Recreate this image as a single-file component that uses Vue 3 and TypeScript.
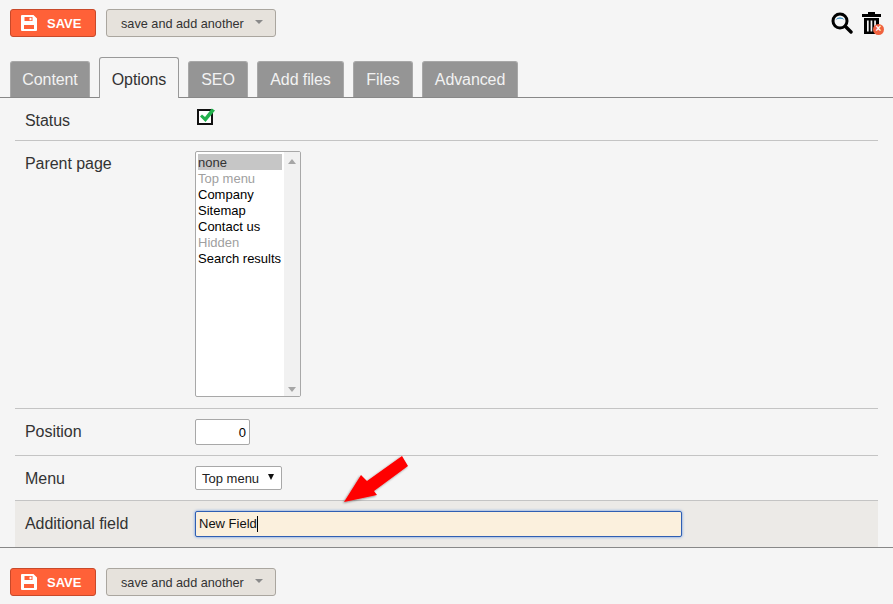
<script setup lang="ts">
const tabs = [
  { label: 'Content', w: 80 },
  { label: 'Options', w: 80, active: true },
  { label: 'SEO', w: 60 },
  { label: 'Add files', w: 87 },
  { label: 'Files', w: 60 },
  { label: 'Advanced', w: 96 },
]
const options = [
  { label: 'none', sel: true },
  { label: 'Top menu', dim: true },
  { label: 'Company' },
  { label: 'Sitemap' },
  { label: 'Contact us' },
  { label: 'Hidden', dim: true },
  { label: 'Search results' },
]
</script>

<template>
  <div class="page">
    <div class="toolbar top">
      <button class="save">
        <svg width="16" height="16" viewBox="0 0 16 16" class="disk">
          <path fill="#fff" fill-rule="evenodd" d="M1 0h11.5L16 3.5V15a1 1 0 0 1-1 1H1a1 1 0 0 1-1-1V1a1 1 0 0 1 1-1zM3.500 2v4h8V2zM3 10v4h10v-4zM8.500 2.700h2v2.600h-2z"/>
        </svg>
        <span>SAVE</span>
      </button>
      <button class="another">
        <span>save and add another</span>
        <i class="caret"></i>
      </button>
      <div class="tools">
        <svg width="22" height="22" viewBox="0 0 22 22">
          <circle cx="9" cy="9" r="7" fill="none" stroke="#000" stroke-width="3"/>
          <path d="M4.500 8a5 5 0 0 1 9 0a6 4 0 0 0-9 0z" fill="#3d93c4"/>
          <path d="M14.500 14.500L20 20" stroke="#000" stroke-width="3.400" stroke-linecap="round"/>
        </svg>
        <span class="trash">
          <svg width="19" height="22" viewBox="0 0 19 22">
            <path fill="#000" fill-rule="evenodd" d="M6 0h7v2h6v3H0V2h6zM2 6h15v16H2zM5 8.500v11h1.700v-11zM8.600 8.500v11h1.700v-11zM12.200 8.500v11h1.700v-11z"/>
          </svg>
          <span class="badge">×</span>
        </span>
      </div>
    </div>

    <div class="tabs">
      <div
        v-for="t in tabs"
        :key="t.label"
        class="tab"
        :class="{ active: t.active }"
        :style="{ width: t.w + 'px' }"
      >{{ t.label }}</div>
    </div>

    <div class="form">
      <div class="row status">
        <label>Status</label>
        <svg class="check" width="18" height="17" viewBox="0 0 18 17">
          <rect x="1" y="2" width="14" height="14" fill="#fff" stroke="#111" stroke-width="2"/>
          <path d="M5 6.500L8 9L14.800 0.500L18 2.500L8.500 14L3 8.500z" fill="#22b14c"/>
        </svg>
      </div>
      <div class="row parent">
        <label>Parent page</label>
        <div class="listbox">
          <div class="items">
            <div
              v-for="o in options"
              :key="o.label"
              class="opt"
              :class="{ sel: o.sel, dim: o.dim }"
            >{{ o.label }}</div>
          </div>
          <div class="scroll">
            <i class="up"></i>
            <i class="down"></i>
          </div>
        </div>
      </div>
      <div class="row position">
        <label>Position</label>
        <div class="num">0</div>
      </div>
      <div class="row menu">
        <label>Menu</label>
        <div class="select"><span>Top menu</span><i class="sel-caret"></i></div>
      </div>
      <div class="row extra">
        <label>Additional field</label>
        <div class="field"><span>New Field</span><i class="cursor"></i></div>
        <svg class="arrow" width="72" height="54" viewBox="0 0 72 54">
          <defs>
            <filter id="sh" x="-20%" y="-20%" width="140%" height="140%">
              <feDropShadow dx="-1" dy="1" stdDeviation="1.200" flood-color="#000" flood-opacity="0.450"/>
            </filter>
          </defs>
          <path d="M62 2L68 12L34 37L37 41L4 48L21 21L27 27z" fill="#f00" filter="url(#sh)"/>
        </svg>
      </div>
    </div>

    <div class="toolbar bottom">
      <button class="save">
        <svg width="16" height="16" viewBox="0 0 16 16" class="disk">
          <path fill="#fff" fill-rule="evenodd" d="M1 0h11.5L16 3.5V15a1 1 0 0 1-1 1H1a1 1 0 0 1-1-1V1a1 1 0 0 1 1-1zM3.500 2v4h8V2zM3 10v4h10v-4zM8.500 2.700h2v2.600h-2z"/>
        </svg>
        <span>SAVE</span>
      </button>
      <button class="another">
        <span>save and add another</span>
        <i class="caret"></i>
      </button>
    </div>
  </div>
</template>

<style>
html, body { margin: 0; background: #f5f5f5; }
</style>

<style scoped>
.page {
  width: 893px;
  height: 604px;
  background: #f5f5f5;
  font-family: "Liberation Sans", Arial, sans-serif;
  color: #333;
  overflow: hidden;
}
.toolbar {
  display: flex;
  align-items: flex-start;
  gap: 10px;
  padding-left: 10px;
}
.toolbar.top { padding-top: 9px; height: 48px; box-sizing: border-box; }
.toolbar.bottom { padding-top: 20px; }
button {
  box-sizing: border-box;
  height: 28px;
  margin: 0;
  border-radius: 3px;
  font-family: inherit;
  display: flex;
  align-items: center;
}
button span { padding-top: 1px; }
.save {
  width: 86px;
  background: #ff6138;
  border: 1px solid #c8492a;
  color: #fff;
  font-weight: bold;
  font-size: 13px;
  padding: 0 0 0 10px;
}
.disk { margin-right: 10px; flex: none; }
.another {
  width: 170px;
  background: #e6e2dc;
  border: 1px solid #aaa69f;
  color: #333;
  font-size: 12.700px;
  padding: 0 0 0 14px;
}
.caret {
  margin-left: 11px;
  margin-top: -3px;
  border-left: 4px solid transparent;
  border-right: 4px solid transparent;
  border-top: 4px solid #8a8a8a;
}
.tools {
  margin-left: auto;
  display: flex;
  gap: 9px;
  align-items: flex-start;
  padding-right: 10px;
  margin-top: 3px;
}
.trash { position: relative; display: block; width: 21px; height: 22px; }
.badge {
  position: absolute;
  right: -1px;
  bottom: -1px;
  width: 11px;
  height: 11px;
  border-radius: 50%;
  background: #f0623f;
  color: #fff;
  font-size: 10px;
  line-height: 10px;
  font-weight: bold;
  text-align: center;
}
.tabs {
  display: flex;
  align-items: flex-end;
  gap: 9px;
  height: 50px;
  box-sizing: border-box;
  padding-left: 10px;
  border-bottom: 1px solid #888;
}
.tab {
  box-sizing: border-box;
  height: 36px;
  background: #959595;
  color: #f2f2f2;
  font-size: 16px;
  letter-spacing: -0.100px;
  text-align: center;
  line-height: 36px;
  border-radius: 3px 3px 0 0;
  border: 1px solid #a8a8a8;
  border-bottom: 0;
}
.tab.active {
  height: 41px;
  margin-bottom: -1px;
  background: #f5f5f5;
  color: #333;
  border: 1px solid #999;
  border-bottom: 0;
  line-height: 43px;
  position: relative;
}
.form { margin: 0 15px; }
.row {
  display: flex;
  align-items: flex-start;
  box-sizing: border-box;
  padding-left: 10px;
  border-bottom: 1px solid #c4c4c4;
  position: relative;
}
.row label {
  width: 170px;
  flex: none;
  font-size: 16px;
  letter-spacing: -0.050px;
  line-height: 18px;
}
.status { height: 43px; padding-top: 13px; }
.status label { padding-top: 1px; }
.check { margin-top: -3px; margin-left: 2px; }
.parent { height: 268px; padding-top: 10px; }
.parent label { padding-top: 4px; }
.listbox {
  box-sizing: border-box;
  width: 106px;
  height: 246px;
  background: #fff;
  border: 1px solid #a8a8a8;
  border-radius: 2px;
  display: flex;
  color: #000;
}
.items { width: 88px; flex: none; padding: 2px 0 0 2px; box-sizing: border-box; }
.opt {
  font-size: 13px;
  line-height: 18px;
  height: 16px;
  white-space: nowrap;
}
.opt.sel { background: #c6c6c6; color: #333; width: 84px; }
.opt.dim { color: #a0a0a0; }
.scroll {
  flex: 1;
  background: #f1f1f1;
  display: flex;
  flex-direction: column;
  justify-content: space-between;
  align-items: center;
  padding: 7px 0 4px;
}
.up {
  border-left: 4px solid transparent;
  border-right: 4px solid transparent;
  border-bottom: 5px solid #a6a6a6;
}
.down {
  border-left: 4px solid transparent;
  border-right: 4px solid transparent;
  border-top: 5px solid #a6a6a6;
}
.position { height: 47px; padding-top: 10px; }
.position label { padding-top: 4px; }
.num {
  box-sizing: border-box;
  width: 55px;
  height: 26px;
  background: #fff;
  border: 1px solid #a8a8a8;
  border-radius: 2px;
  text-align: right;
  font-size: 13px;
  line-height: 25px;
  padding-right: 3px;
  color: #000;
}
.menu { height: 45px; padding-top: 10px; }
.menu label { padding-top: 4px; }
.select {
  box-sizing: border-box;
  width: 87px;
  height: 24px;
  background: #fff;
  border: 1px solid #a8a8a8;
  border-radius: 2px;
  font-size: 13px;
  line-height: 22px;
  padding-left: 6px;
  color: #222;
  display: flex;
  align-items: center;
}
.select span { padding-top: 1px; }
.sel-caret {
  margin-left: 9px;
  margin-top: -2px;
  border-left: 3.500px solid transparent;
  border-right: 3.500px solid transparent;
  border-top: 6px solid #111;
}
.extra {
  height: 46px;
  background: #eceae7;
  padding-top: 10px;
  border-bottom: 0;
}
.extra label { padding-top: 4px; }
.field {
  box-sizing: border-box;
  width: 487px;
  height: 26px;
  background: #fbf0dd;
  border: 1px solid #2f5fb3;
  border-radius: 2px;
  box-shadow: 0 0 3px #5b8fe0;
  font-size: 13px;
  line-height: 24px;
  padding-left: 3px;
  color: #111;
  display: flex;
  align-items: center;
}
.cursor { width: 1px; height: 16px; background: #000; }
.arrow { position: absolute; left: 325px; top: -47px; }
.bottom { border-top: 1px solid #888; }
</style>
